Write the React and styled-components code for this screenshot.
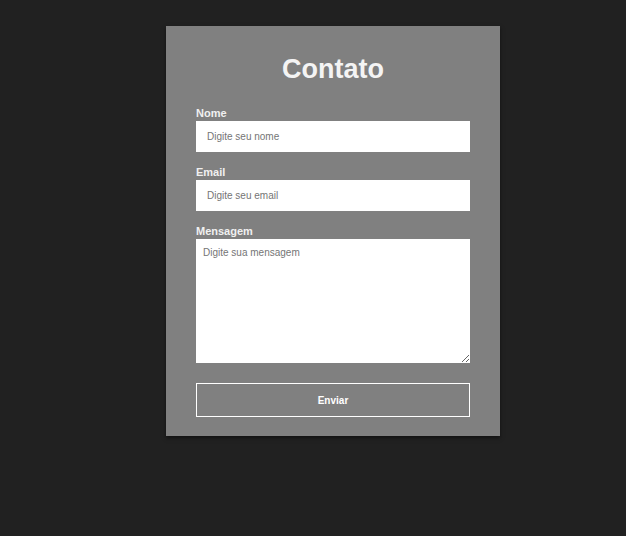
import React from 'react';
import styled, { createGlobalStyle } from 'styled-components';

const GlobalStyle = createGlobalStyle`
  html, body {
    margin: 0;
    padding: 0;
    min-height: 100%;
    background-color: #212121;
    font-family: 'Liberation Sans', Arial, sans-serif;
  }
`;

const Page = styled.div`
  min-height: 536px;
  padding: 26px 0 0 166px;
  box-sizing: border-box;
`;

const Card = styled.form`
  width: 334px;
  box-sizing: border-box;
  padding: 28px 30px 19px;
  background-color: #808080;
  box-shadow: 0 2px 4px rgba(0, 0, 0, 0.5);
  display: flex;
  flex-direction: column;
`;

const Title = styled.h1`
  margin: 0 0 21px;
  font-size: 27px;
  font-weight: bold;
  color: #f4f4f4;
  text-align: center;
`;

const Field = styled.div`
  display: flex;
  flex-direction: column;
  margin-bottom: ${props => props.gap}px;
`;

const Label = styled.label`
  font-size: 11px;
  line-height: 14px;
  font-weight: bold;
  color: #f0f0f0;
  margin-bottom: 1px;
`;

const Input = styled.input`
  height: 31px;
  box-sizing: border-box;
  border: none;
  outline: none;
  padding: 0 11px;
  font-family: inherit;
  font-size: 10px;
  background: #fff;
`;

const TextArea = styled.textarea`
  height: 124px;
  box-sizing: border-box;
  border: none;
  outline: none;
  padding: 8px 7px;
  font-family: inherit;
  font-size: 10px;
  background: #fff;
`;

const Button = styled.button`
  height: 34px;
  border: 1px solid #fff;
  background: transparent;
  color: #fff;
  font-family: inherit;
  font-size: 10px;
  font-weight: bold;
  cursor: pointer;
`;

export default function App() {
  return (
    <Page>
      <GlobalStyle />
      <Card onSubmit={e => e.preventDefault()}>
        <Title>Contato</Title>
        <Field gap={13}>
          <Label htmlFor="nome">Nome</Label>
          <Input id="nome" type="text" placeholder="Digite seu nome" />
        </Field>
        <Field gap={13}>
          <Label htmlFor="email">Email</Label>
          <Input id="email" type="email" placeholder="Digite seu email" />
        </Field>
        <Field gap={20}>
          <Label htmlFor="mensagem">Mensagem</Label>
          <TextArea id="mensagem" placeholder="Digite sua mensagem" />
        </Field>
        <Button type="submit">Enviar</Button>
      </Card>
    </Page>
  );
}
